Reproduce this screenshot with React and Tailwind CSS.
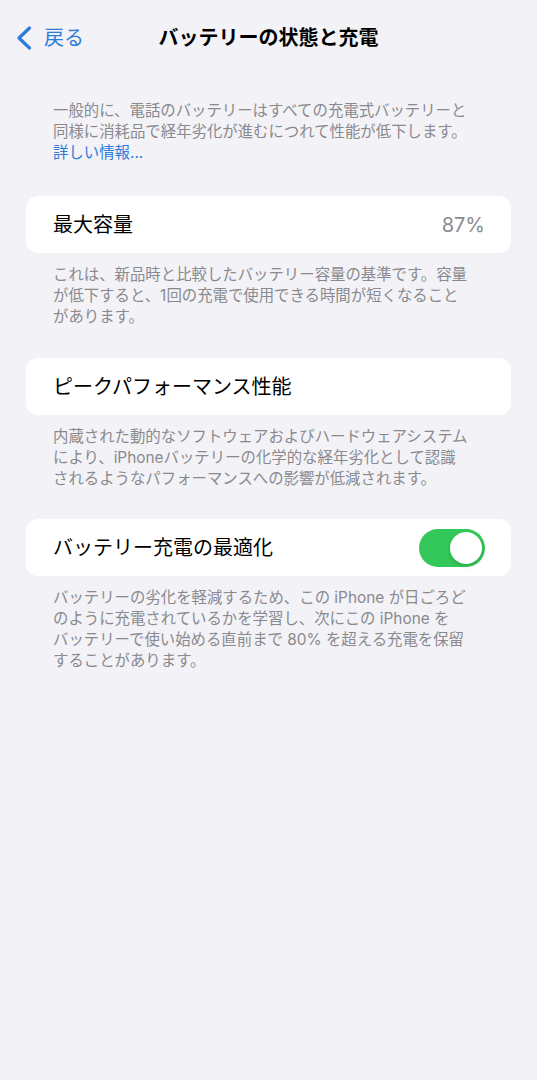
import React, { useState } from "react";

const font = { fontFamily: 'Inter, "Noto Sans CJK JP", sans-serif' };

/* iOS style switch */
const Toggle = ({ on, onChange }) => (
  <button
    type="button"
    onClick={() => onChange(!on)}
    className={`flex h-[38px] w-[66px] items-center rounded-full p-[3px] ${
      on ? "bg-[#34c759] justify-end" : "bg-[#e5e5ea] justify-start"
    }`}
  >
    <span className="block h-[32px] w-[32px] rounded-full bg-white shadow-[0_2px_4px_rgba(0,0,0,0.15)]" />
  </button>
);

const Footer = ({ children }) => (
  <p className="mx-[53px] mt-[11px] text-[15.4px] leading-[21px] text-[#8a8a8e]">{children}</p>
);

const Card = ({ children, className = "" }) => (
  <div
    className={`mx-[26px] flex h-[57px] items-center justify-between rounded-[12px] bg-white pl-[27px] pr-[26px] ${className}`}
  >
    {children}
  </div>
);

export default function App() {
  const [optimized, setOptimized] = useState(true);

  return (
    <div className="min-h-screen bg-[#f2f2f7] pt-[22px] text-black" style={font}>
      {/* nav bar */}
      <header className="relative flex h-[32px] items-center justify-center">
        <button className="absolute left-[16px] top-0 flex h-[32px] items-center gap-[12px] text-[#2f7bd9]">
          <svg width="16" height="24" viewBox="0 0 16 24" fill="none">
            <path d="M13.5 2 L3 12 L13.5 22" stroke="#2f7bd9" strokeWidth="3.2" strokeLinecap="round" strokeLinejoin="round" />
          </svg>
          <span className="text-[20px] leading-[32px]">戻る</span>
        </button>
        <h1 className="text-[20px] font-bold leading-[32px]">バッテリーの状態と充電</h1>
      </header>

      {/* intro */}
      <p className="mx-[53px] mt-[46px] text-[15.4px] leading-[21px] text-[#8a8a8e]">
        一般的に、電話のバッテリーはすべての充電式バッテリーと
        <br />
        同様に消耗品で経年劣化が進むにつれて性能が低下します。
        <br />
        <a className="text-[#2f7bd9]">詳しい情報...</a>
      </p>

      <Card className="mt-[33px]">
        <span className="text-[20px]">最大容量</span>
        <span className="text-[20px] text-[#8a8a8e]">87%</span>
      </Card>
      <Footer>
        これは、新品時と比較したバッテリー容量の基準です。容量
        <br />
        が低下すると、1回の充電で使用できる時間が短くなること
        <br />
        があります。
      </Footer>

      <Card className="mt-[31px]">
        <span className="text-[20px]">ピークパフォーマンス性能</span>
      </Card>
      <Footer>
        内蔵された動的なソフトウェアおよびハードウェアシステム
        <br />
        により、iPhoneバッテリーの化学的な経年劣化として認識
        <br />
        されるようなパフォーマンスへの影響が低減されます。
      </Footer>

      <Card className="mt-[30px]">
        <span className="text-[20px]">バッテリー充電の最適化</span>
        <Toggle on={optimized} onChange={setOptimized} />
      </Card>
      <Footer>
        バッテリーの劣化を軽減するため、この iPhone が日ごろど
        <br />
        のように充電されているかを学習し、次にこの iPhone を
        <br />
        バッテリーで使い始める直前まで 80% を超える充電を保留
        <br />
        することがあります。
      </Footer>
    </div>
  );
}
